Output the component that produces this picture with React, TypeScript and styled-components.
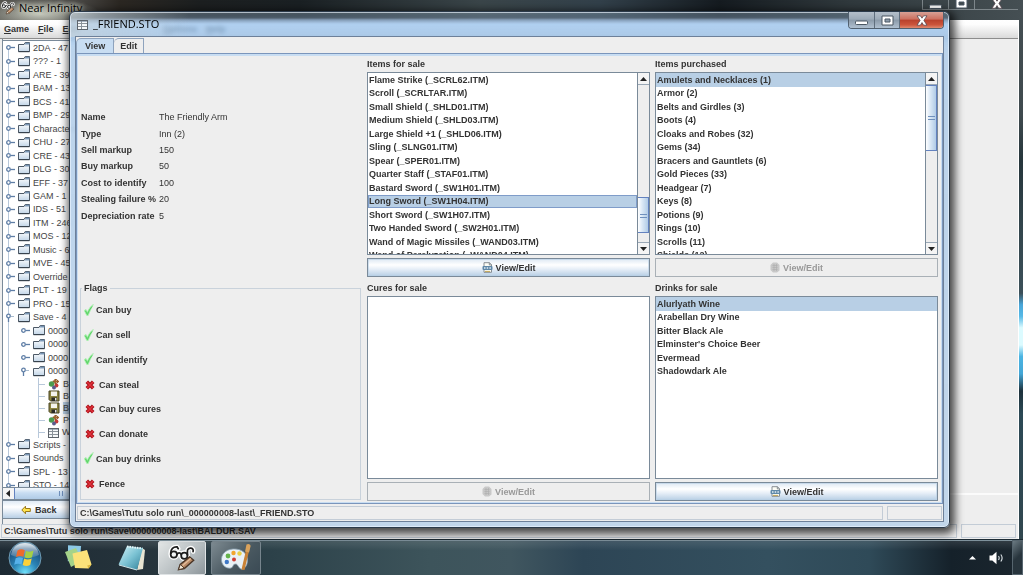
import React from "react";
import styled, { createGlobalStyle, css } from "styled-components";

const GlobalStyle = createGlobalStyle`
  *, *::before, *::after { box-sizing: border-box; }
  body {
    margin: 0;
    background: #26343c;
    color: #333;
    font: 9px/12px "Liberation Sans", Arial, sans-serif;
    cursor: default;
    overflow: hidden;
  }
  button { font: inherit; color: inherit; }
  ul { list-style: none; margin: 0; padding: 0; }
`;

/* ---------- desktop ---------- */

const Desktop = styled.div`
  position: relative;
  min-height: 100vh;
  display: flex;
  flex-direction: column;
  background: linear-gradient(
    #454f53 0, #3f4a4e 20%, #26363c 28%, #33464d 40%, #3c5059 51%,
    #48a5d8 53%, #56b9e6 55%, #dcfbff 57%, #dcfbff 60%, #4bb4e2 62%,
    #43a6d6 65%, #1d323c 68%, #2c4955 72%, #33464d 100%
  );
`;

/* ---------- browser window at the back ---------- */

const MainWindow = styled.div`
  flex: 1;
  display: flex;
  flex-direction: column;
  margin-right: 4px;
  border-right: 1px solid #fff;
`;

const MainTitleBar = styled.header`
  display: flex;
  align-items: flex-start;
  justify-content: space-between;
  height: 20px;
  margin-right: -5px;
  background:
    radial-gradient(ellipse 60px 16px at 40px 14px, rgba(235, 240, 225, 0.75), transparent),
    linear-gradient(90deg, #55544f 0, #4a4946 75px, #2b2722 120px, #1c1f20 200px, #1a2023 300px, #3a4549 480px, #32404a 600px, #151b20 720px, #30393d 850px, #454f53 100%);
`;

const MainTitle = styled.div`
  display: flex;
  align-items: center;
  gap: 4px;
  height: 15px;
  padding-left: 1px;
  color: #000;
  font: 11px/15px "Open Sans", "Noto Sans", sans-serif;
  text-shadow: 0 0 5px #e8ecdc, 0 0 5px #c8ccbc;
`;

const MainControls = styled.div`
  display: flex;
  height: 10px;
  margin-right: 5px;
  overflow: hidden;
`;

const MainControl = styled.button<{ $wide?: boolean }>`
  display: flex;
  align-items: flex-end;
  justify-content: center;
  width: ${(p) => (p.$wide ? 44 : 26)}px;
  padding: 0;
  border: 0 solid #7d868a;
  border-width: 0 0 1px 1px;
  background: transparent;
`;

const MenuBar = styled.nav`
  display: grid;
  grid-template-columns: 150px 1fr;
  gap: 9px;
  height: 19px;
  padding: 3px 4px;
  border-bottom: 1px solid #8d8d8d;
  background: linear-gradient(#fff 0, #fdfdfd 25%, #dadada 100%);
  font-weight: bold;
`;

const MenuGroup = styled.div`
  display: flex;
  gap: 9px;
`;

const MenuItem = styled.button`
  padding: 0;
  border: 0;
  background: none;
  font-weight: bold;
  line-height: 12px;

  &::first-letter { text-decoration: underline; }
`;

const MainBody = styled.div`
  flex: 1;
  display: grid;
  grid-template-columns: 320px 1fr;
  gap: 4px;
  min-height: 0;
  background: #eee;
`;

const TreePane = styled.div`
  display: flex;
  flex-direction: column;
  margin-left: 2px;
  padding-top: 1px;
  border-left: 1px solid #7a8a99;
`;

const EditorPane = styled.div`
  height: 456px;
  border-bottom: 2px solid #fbfbfb;
`;

const TreeView = styled.div`
  height: 447px;
  overflow: hidden;
  border-top: 1px solid #7a8a99;
  background:
    linear-gradient(#b8c8da, #b8c8da) 5px 6px / 1px 100% no-repeat,
    #fff;
`;

const TreeGroup = styled.ul<{ $height: number }>`
  display: grid;
  grid-auto-rows: 1fr;
  height: ${(p) => p.$height}px;
`;

const TreeRow = styled.li<{ $level: number; $selected?: boolean }>`
  display: flex;
  align-items: center;
  gap: 3px;
  min-height: 0;
  padding-left: ${(p) => [3, 18, 33][p.$level]}px;
  white-space: nowrap;
  color: #444;

  span {
    background: ${(p) => (p.$selected ? "#b8cfe5" : "transparent")};
  }
`;

const HScrollBar = styled.div`
  display: flex;
  height: 13px;
  border: 1px solid #7a8a99;
  border-left: 0;
  background: #eee;
`;

const HThumb = styled.div`
  display: flex;
  align-items: center;
  justify-content: center;
  width: 92px;
  border: 1px solid #6382bf;
  border-width: 0 1px;
  background: linear-gradient(#f4f8fc, #c8ddf2 45%, #b0cbe6);
`;

const BackButton = styled.button`
  display: flex;
  align-items: center;
  gap: 4px;
  height: 19px;
  padding: 0 0 0 18px;
  border: 1px solid #7a8a99;
  border-left: 0;
  background: linear-gradient(#dfeaf5, #fff 35%, #e6eef7 60%, #b8cfe5);
  font-weight: bold;
`;

const StatusRow = styled.footer`
  display: grid;
  grid-template-columns: 1fr 55px;
  gap: 4px;
  background: #eee;
  font-weight: bold;
`;

const StatusField = styled.div`
  height: 14px;
  padding-left: 2px;
  border: 1px solid #c3ccd6;
  white-space: nowrap;
`;

const MainStatus = styled(StatusRow)`
  padding: 0 2px 1px 1px;
`;

/* ---------- store dialog ---------- */

const Dialog = styled.section`
  position: absolute;
  top: 11px;
  left: 69px;
  right: 73px;
  padding: 0 5px 5px;
  border: 1px solid #2b3a4a;
  border-radius: 6px;
  background:
    linear-gradient(90deg, rgba(205, 213, 216, 0.6), rgba(205, 213, 216, 0) 120px) 0 0 / 100% 25px no-repeat,
    linear-gradient(
      rgba(150, 175, 195, 0.4) 0, rgba(90, 112, 135, 0.6) 6px, rgba(128, 158, 190, 0.8) 8px,
      rgba(150, 192, 235, 0.75) 12px, rgba(155, 195, 235, 0.75) 25px, rgba(180, 207, 234, 0.9) 40px, rgba(190, 212, 234, 0.92) 100%
    );
  backdrop-filter: blur(2px);
  box-shadow: inset 0 0 0 1px rgba(235, 245, 255, 0.65), 2px 3px 9px 3px rgba(0, 0, 0, 0.7);
`;

const DialogTitleBar = styled.header`
  display: flex;
  justify-content: space-between;
  height: 24px;
`;

const DialogTitle = styled.h1`
  display: flex;
  align-items: center;
  gap: 5px;
  margin: 0;
  padding-left: 2px;
  color: #000;
  font: 11px/16px "Open Sans", "Noto Sans", sans-serif;
`;

const WindowControls = styled.div`
  display: flex;
  height: 17px;
  border: 1px solid #51606f;
  border-top: 0;
  border-radius: 0 0 4px 4px;
  overflow: hidden;
`;

const WindowControl = styled.button<{ $close?: boolean }>`
  display: flex;
  align-items: center;
  justify-content: center;
  width: ${(p) => (p.$close ? 44 : 25)}px;
  padding: 0;
  border: 0;
  border-left: ${(p) => (p.$close ? "1px solid #7a4a48" : "0")};
  background: ${(p) =>
    p.$close
      ? "linear-gradient(#d8a095 0, #cc6f5f 45%, #b9412d 50%, #cc553c 80%, #e08a70)"
      : "linear-gradient(#b4bfca 0, #9caab7 45%, #8b9aa9 50%, #b0c0d0)"};

  & + & { border-left: 1px solid #5f6e7d; }
`;

const DialogBody = styled.div`
  display: flex;
  flex-direction: column;
  border: 1px solid #6d8099;
  background: #eee;
`;

const TabStrip = styled.div`
  display: flex;
  align-items: flex-end;
  height: 16px;
`;

const Tab = styled.button<{ $active?: boolean }>`
  height: 15px;
  padding: 0 8px;
  border: 1px solid #8ea3bd;
  border-bottom: 0;
  border-top-left-radius: 5px;
  background: ${(p) => (p.$active ? "#c8ddf2" : "#eee")};
  font-weight: bold;
  line-height: 14px;

  & + & { border-left: 0; padding: 0 6px; }
`;

const TabPanel = styled.div`
  display: grid;
  grid-template-columns: repeat(3, minmax(0, 1fr));
  column-gap: 5px;
  row-gap: 3px;
  padding: 0 3px 1px 1px;
  border: 2px solid #c8ddf2;
  border-top-width: 3px;
  outline: 1px solid #7a95bb;
  outline-offset: -1px;
`;

const Cell = styled.div`
  display: flex;
  flex-direction: column;
  min-width: 0;
`;

const DetailsCell = styled(Cell)`
  justify-content: center;
`;

const DetailsTable = styled.table`
  height: 115px;
  border-collapse: collapse;

  th, td {
    padding: 0;
    text-align: left;
    line-height: 12px;
  }
  th { width: 80px; padding-left: 2px; white-space: nowrap; }
`;

const Flags = styled.fieldset`
  flex: 1;
  margin: 2px 1px 1px 1px;
  padding: 0;
  border: 1px solid #c9d2db;
  min-width: 0;

  legend {
    margin-left: 1px;
    padding: 0 2px;
    height: 12px;
    font-weight: bold;
  }
`;

const FlagList = styled.ul`
  display: grid;
  grid-auto-rows: 1fr;
  height: 198px;
  margin-top: 4px;
`;

const FlagItem = styled.li<{ $on: boolean }>`
  display: flex;
  align-items: center;
  gap: ${(p) => (p.$on ? 2 : 4)}px;
  padding-left: ${(p) => (p.$on ? 3 : 4)}px;
  font-weight: bold;
`;

const ListTitle = styled.h2`
  margin: 0;
  height: 16px;
  font: bold 9px/17px "Liberation Sans", Arial, sans-serif;
`;

const ListFrame = styled.div`
  display: flex;
  height: 183px;
  border: 1px solid #7a8a99;
  background: #fff;
`;

const ListViewport = styled.div`
  flex: 1;
  overflow: hidden;
  min-width: 0;
`;

const ItemList = styled.ul<{ $rows: number; $height: number }>`
  display: grid;
  grid-template-rows: repeat(${(p) => p.$rows}, minmax(0, 1fr));
  height: ${(p) => p.$height}px;
`;

const ListItem = styled.li<{ $selected?: boolean; $focused?: boolean }>`
  display: flex;
  align-items: center;
  padding-left: 1px;
  font-weight: bold;
  white-space: nowrap;
  ${(p) =>
    p.$selected &&
    css`
      background: #b8cfe5;
      box-shadow: inset 0 0 0 1px ${p.$focused ? "#7f9cc9" : "#b8cfe5"};
    `}
`;

const VScrollBar = styled.div`
  display: flex;
  flex-direction: column;
  width: 12px;
  border-left: 1px solid #7a8a99;
  background: #eee;
`;

const ScrollArrow = styled.button<{ $end?: boolean; $horizontal?: boolean }>`
  display: flex;
  align-items: center;
  justify-content: center;
  flex: none;
  width: 11px;
  height: ${(p) => (p.$horizontal ? 11 : 12)}px;
  padding: 0;
  border: 0 solid #9aa8b6;
  ${(p) => !p.$horizontal && (p.$end ? "border-top-width: 1px;" : "border-bottom-width: 1px;")}
  background: #f4f4f4;
`;

const Track = styled.div<{ $before: number; $thumb: number; $after: number }>`
  flex: 1;
  display: grid;
  grid-template-rows: ${(p) => `${p.$before}fr ${p.$thumb}fr ${p.$after}fr`};
`;

const Thumb = styled.div`
  grid-row: 2;
  display: flex;
  align-items: center;
  justify-content: center;
  border: 1px solid #6382bf;
  border-left: 0;
  background: linear-gradient(90deg, #fff, #dce9f6 40%, #b0cbe6);
`;

const ViewEditButton = styled.button`
  display: flex;
  align-items: center;
  justify-content: center;
  gap: 3px;
  height: 19px;
  margin-top: 3px;
  padding: 0;
  border: 1px solid #7a8a99;
  background: linear-gradient(#dde8f3, #fff 35%, #e6eef7 60%, #b8cfe5);
  box-shadow: inset 0 0 0 1px rgba(184, 207, 229, 0.6);
  font-weight: bold;

  &:disabled {
    border-color: #a9b0b6;
    background: #eee;
    box-shadow: none;
    color: #999;
  }
`;

const DialogStatus = styled(StatusRow)`
  padding: 2px 1px 1px;
`;

/* ---------- taskbar ---------- */

const Taskbar = styled.footer`
  display: flex;
  align-items: stretch;
  height: 36px;
  border-top: 1px solid #1c2a33;
  box-shadow: inset 0 1px 0 #7f929c;
  background:
    linear-gradient(rgba(255, 255, 255, 0.12), rgba(255, 255, 255, 0) 30%),
    linear-gradient(90deg, #1d2a33 0, #26343c 150px, #2c4149 270px, #3d545b 42%, #40565f 50%, #2d4555 57%, #34505f 75%, #2f4a58 85%, #15212a 93%, #1b262e 100%);
`;

const TaskButton = styled.button<{ $kind?: "active" | "open"; $width: number }>`
  display: flex;
  align-items: center;
  justify-content: center;
  width: ${(p) => p.$width}px;
  margin: 1px 0 0;
  padding: 0;
  border: 0;
  background: none;
  ${(p) =>
    p.$kind &&
    css`
      margin-right: 5px;
      border: 1px solid ${p.$kind === "active" ? "#dfe3e5" : "#77858d"};
      border-radius: 2px;
      background: ${p.$kind === "active"
        ? "linear-gradient(135deg, #e3e6e6, #b4bbbe 60%, #8d969b)"
        : "linear-gradient(135deg, #7d8a91, #4a5961 55%, #3a4a54)"};
    `}
`;

const Tray = styled.div`
  display: flex;
  align-items: center;
  gap: 13px;
  margin-left: auto;
`;

const TrayButton = styled.button`
  display: flex;
  padding: 0;
  border: 0;
  background: none;
`;

const ShowDesktop = styled.button`
  align-self: stretch;
  width: 11px;
  margin-left: -5px;
  padding: 0;
  border: 1px solid #56656e;
  background: linear-gradient(135deg, #6b7a82, #28353d 50%);
`;

/* ---------- drawings ---------- */

const GlassesIcon = ({ size }: { size: number }) => (
  <svg width={size} height={size} viewBox="0 0 24 24" fill="none">
    <g stroke="#fff" strokeWidth="3.8" strokeLinecap="round" strokeLinejoin="round">
      <circle cx="5" cy="9" r="2.700" />
      <circle cx="14" cy="10" r="2.700" />
      <path d="M2.300 8C2.300 4.500 4.500 2.200 7.800 2.500l1 1.500M7.700 9c1-1.800 2.800-1.800 3.600 0M16.700 9.500c0-3.500-.7-5.500 2.300-6 2-.3 3 1.500 2.500 3" />
    </g>
    <g stroke="#1d1d1d" strokeWidth="1.500" strokeLinecap="round">
      <circle cx="5" cy="9" r="2.700" fill="#f2f4f4" />
      <circle cx="14" cy="10" r="2.700" fill="#f2f4f4" />
      <path d="M2.300 8C2.300 4.500 4.500 2.200 7.800 2.500l1 1.500M7.700 9c1-1.800 2.800-1.800 3.600 0M16.700 9.500c0-3.500-.7-5.500 2.300-6 2-.3 3 1.500 2.500 3" />
    </g>
    <path d="M9 22l1.500-4.500 8-6.500 3.500 3-8 7z" fill="#b98a66" stroke="#4a3526" strokeWidth="1.200" />
    <path d="M9 22l1.500-4.500 3.500 3.300z" fill="#f4ead8" stroke="#4a3526" strokeWidth=".8" />
    <path d="M12.500 18.500l7-6" stroke="#e2bd9c" strokeWidth="1.200" />
  </svg>
);

const TableIcon = () => (
  <svg width="11" height="11" viewBox="0 0 11 11" fill="none">
    <rect x=".5" y="1.500" width="10" height="9" fill="#f6f8f9" stroke="#5d646b" />
    <path d="M1 2.500h9" stroke="#a8b4c2" />
    <path d="M1 4.500h9M1 7.500h9M4.500 2v8" stroke="#8a9299" />
  </svg>
);

const Expander = ({ open }: { open?: boolean }) => (
  <svg width="9" height="9" viewBox="0 0 9 9" fill="none" stroke="#5f7ea6">
    {open ? (
      <>
        <circle cx="2.500" cy="3" r="1.800" fill="#fff" strokeWidth="1.300" />
        <path d="M2.500 5v4" strokeWidth="1.300" />
        <path d="M5 3.500h3" stroke="#a9bccf" />
      </>
    ) : (
      <>
        <circle cx="2.500" cy="4.500" r="1.800" fill="#fff" strokeWidth="1.300" />
        <path d="M4.500 4.500H9" strokeWidth="1.300" />
      </>
    )}
  </svg>
);

const FolderIcon = () => (
  <svg width="12" height="11" viewBox="0 0 12 11">
    <defs>
      <linearGradient id="folder" x1="0" y1="0" x2="0" y2="1">
        <stop offset="0" stopColor="#fff" />
        <stop offset="1" stopColor="#c3d6e8" />
      </linearGradient>
    </defs>
    <path d="M.5 2.500h5.500L7.200.5h4.300v9H.5z" fill="url(#folder)" stroke="#4d5966" />
    <path d="M6.500 2.500L7.500.8h4v1.700z" fill="#7996b5" />
    <path d="M.5 9.700h11" stroke="#333d48" />
  </svg>
);

const PictureIcon = () => (
  <svg width="12" height="12" viewBox="0 0 12 12">
    <path d="M7.500 1v8M4.500 3.500h6.500" stroke="#a5662f" strokeWidth="1.500" />
    <circle cx="7.800" cy="3.500" r="2" fill="none" stroke="#8d5a2a" />
    <circle cx="3.500" cy="6" r="2.700" fill="#4d9a4f" />
    <circle cx="8.500" cy="7.500" r="1.900" fill="#c43a3a" />
    <circle cx="6" cy="9.500" r="2" fill="#5a5c8c" />
  </svg>
);

const DiskIcon = () => (
  <svg width="12" height="12" viewBox="0 0 12 12">
    <path d="M1 1h10v10H2.500L1 9.500z" fill="#8c8540" stroke="#4a4624" />
    <rect x="3" y="1.500" width="6" height="4.500" fill="#f4f4ee" />
    <rect x="3.500" y="7.500" width="5.500" height="3.500" fill="#2b2b26" />
    <rect x="7" y="8" width="1.500" height="2.500" fill="#e8e8e0" />
  </svg>
);

const LeafLine = () => (
  <svg width="9" height="12" viewBox="0 0 9 12" stroke="#b8c8da">
    <path d="M2.500 0v12M3 6.500h6" />
  </svg>
);

const BackArrow = () => (
  <svg width="10" height="10" viewBox="0 0 10 10">
    <path d="M.8 5L4.500 1.200v2.300h4.800v3H4.500v2.300z" fill="#ffe34d" stroke="#9a7a1c" />
  </svg>
);

const Triangle = ({ dir }: { dir: "up" | "down" | "left" }) => {
  const d = { up: "M0 5l3.500-4L7 5z", down: "M0 1l3.500 4L7 1z", left: "M5 0L1 3.500 5 7z" }[dir];
  return (
    <svg width="7" height={dir === "left" ? 7 : 6} viewBox={dir === "left" ? "0 0 7 7" : "0 0 7 6"}>
      <path d={d} fill="#222" />
    </svg>
  );
};

const Grip = ({ vertical }: { vertical?: boolean }) => (
  <svg width="7" height="7" viewBox="0 0 7 7" stroke="#6f90bd">
    <path d={vertical ? "M2.500 1v5M5.500 1v5" : "M0 2.500h7M0 5.500h7"} />
  </svg>
);

const CheckIcon = () => (
  <svg width="10" height="13" viewBox="0 0 10 13" fill="none">
    <path d="M.3 6.500l1.700-1 1.500 2.500C4.800 4.800 6.500 2.500 9.300.5 7.500 4 5.500 7.500 4.200 11.500H2.800z" fill="#7fe487" stroke="#a9eeae" strokeWidth=".9" />
    <path d="M1.500 7l1.900 3.500C4.500 7.500 6 4.800 8 2.500" stroke="#5cd166" />
  </svg>
);

const CrossIcon = () => (
  <svg width="10" height="10" viewBox="0 0 10 10">
    <path d="M1.800 1.800l6.400 6.400M8.200 1.800L1.800 8.200" stroke="#a80f18" strokeWidth="3.600" />
    <path d="M2 2l6 6M8 2L2 8" stroke="#e2333c" strokeWidth="1.500" />
  </svg>
);

const ZoomPageIcon = ({ disabled }: { disabled?: boolean }) =>
  disabled ? (
    <svg width="10" height="11" viewBox="0 0 10 11">
      <path d="M3 .5h4L9.500 3v5.500L7 10.500H3L.5 8V3z" fill="#c8c8c8" />
      <path d="M2.500 3.500h5M2.500 5.500h5M2.500 7.500h5M4 2v7M6.500 2v7" stroke="#b0b0b0" strokeWidth=".7" />
    </svg>
  ) : (
    <svg width="11" height="11" viewBox="0 0 11 11">
      <path d="M2 .7h5.500l2 2v7.600H2z" fill="#fdfdf6" stroke="#7c8288" strokeWidth=".9" />
      <path d="M7.300.7v2.200h2.200" fill="none" stroke="#7c8288" strokeWidth=".9" />
      <rect x=".5" y="4" width="10" height="4" rx="1" fill="#5f88a8" />
      <path d="M2 6h1.500M4.700 6h1.500M7.400 6h1.500" stroke="#e4eef5" strokeWidth="1.300" />
      <path d="M3 9.400h5" stroke="#c2a552" />
    </svg>
  );

const MinimizeGlyph = () => (
  <svg width="13" height="10" viewBox="0 0 13 10">
    <rect x=".5" y="6" width="12" height="3.500" rx="1" fill="#fff" stroke="#4a5763" />
  </svg>
);

const MaximizeGlyph = () => (
  <svg width="13" height="11" viewBox="0 0 13 11">
    <path d="M1 1h11v9H1zM4 4v3h5V4z" fillRule="evenodd" fill="#fff" stroke="#4a5763" />
  </svg>
);

const CloseGlyph = () => (
  <svg width="12" height="11" viewBox="0 0 12 11">
    <path d="M1 .8h3.400L6 3.200 7.600.8H11L7.900 5.400 11 10.200H7.600L6 7.600l-1.600 2.600H1l3.100-4.800z" fill="#fff" stroke="#5a4a50" strokeWidth=".8" />
  </svg>
);

const StartOrb = () => (
  <svg width="36" height="34" viewBox="0 0 36 34">
    <defs>
      <radialGradient id="orb" cx=".5" cy=".95" r=".95">
        <stop offset="0" stopColor="#6fe0fa" />
        <stop offset=".4" stopColor="#2b86b8" />
        <stop offset=".8" stopColor="#1c4f7d" />
        <stop offset="1" stopColor="#7fa3ba" />
      </radialGradient>
      <linearGradient id="shine" x1="0" y1="0" x2="0" y2="1">
        <stop offset="0" stopColor="#fff" stopOpacity=".8" />
        <stop offset="1" stopColor="#fff" stopOpacity=".1" />
      </linearGradient>
    </defs>
    <circle cx="18" cy="17" r="16" fill="url(#orb)" stroke="#6f9bb3" />
    <path d="M4 14C5 6 11 2 18 2s13 4 14 12c-8 4-20 4-28 0z" fill="url(#shine)" />
    <path d="M10.500 9.500c2.500-1.500 5-1.500 7.300-.2l-1.500 6.500c-2.300-1.300-4.800-1.200-7.300.2z" fill="#ee6a2c" />
    <path d="M19 9.800c2.500 1.300 5 1.200 7.500-.2L25 16.200c-2.500 1.400-5 1.400-7.500.1z" fill="#a5cf45" />
    <path d="M8.700 17.300c2.500-1.400 5-1.400 7.300-.2l-1.500 6.500c-2.300-1.300-4.800-1.200-7.300.2z" fill="#56b1ea" />
    <path d="M17.200 17.600c2.500 1.300 5 1.200 7.500-.2l-1.500 6.600c-2.500 1.400-5 1.400-7.500.1z" fill="#fbd13a" />
  </svg>
);

const StickyNotesIcon = () => (
  <svg width="30" height="28" viewBox="0 0 30 28">
    <path d="M4 2l13-1 1 14-12 3z" fill="#8cc8e6" transform="rotate(8 10 9)" />
    <path d="M2 8l11-4 6 13-11 6z" fill="#a5d389" />
    <path d="M9.500 9.500L24 6l4.500 14.500-3 4-13.500-.5z" fill="#fbe27a" />
    <path d="M28.500 20.500l-4.300 1 1.300 3z" fill="#d9b53f" />
  </svg>
);

const NotepadIcon = () => (
  <svg width="30" height="28" viewBox="0 0 30 28">
    <defs>
      <linearGradient id="pad" x1="0" y1="0" x2="1" y2="1">
        <stop offset="0" stopColor="#d4f2f7" />
        <stop offset=".5" stopColor="#7cc3d4" />
        <stop offset="1" stopColor="#2f7f98" />
      </linearGradient>
    </defs>
    <path d="M25 4l3 2-2 19-6 1z" fill="#e8e4d2" />
    <path d="M10 2l16 2-6 22L1.500 20.500z" fill="url(#pad)" />
    <path d="M10 2.500l15.500 2" stroke="#e8f6f8" strokeWidth="2" strokeDasharray="1.500 1" />
    <path d="M2 21l18 5" stroke="#d2e9ee" />
  </svg>
);

const PaintIcon = () => (
  <svg width="32" height="30" viewBox="0 0 32 30">
    <path d="M13 6C5 6.500 1 12 1.500 17.500 2 23 7 26 11 25c2.500-.7 1.500-3.500 4-4 2.500-.4 3 2.500 5 4.500 3 2.500 7.500-2 7.500-8.500C27.500 10 21 5.500 13 6z" fill="#e9f1f6" stroke="#8ba2b2" strokeWidth=".8" />
    <circle cx="8" cy="13" r="2.400" fill="#63b24b" />
    <circle cx="13.500" cy="10" r="2.200" fill="#f2a52d" />
    <circle cx="19.500" cy="10.500" r="2.200" fill="#e9cf46" />
    <circle cx="6.800" cy="19" r="2.200" fill="#3f78c6" />
    <circle cx="14" cy="16.500" r="2" fill="#cf3c33" />
    <path d="M27 3l3 1-5.500 23-3-.5z" fill="#c98236" />
    <path d="M26.500 1.500c2-1.500 4.500 0 4 2l-1.500 6-4-1z" fill="#d9a25c" />
  </svg>
);

const SpeakerIcon = () => (
  <svg width="15" height="14" viewBox="0 0 15 14" fill="none">
    <path d="M.5 4.500h2.800L7.500.8v12.400L3.300 9.500H.5z" fill="#fff" />
    <path d="M9.500 5c.8 1.200.8 2.800 0 4M11.800 3.500c1.500 2 1.500 5 0 7" stroke="#dfe6ea" strokeWidth="1.100" />
  </svg>
);

/* ---------- data ---------- */

const menuGroups = [["Game", "File", "Edit"], ["Options", "Help"]];

const folders = [
  "2DA - 47", "??? - 1", "ARE - 39", "BAM - 13", "BCS - 41", "BMP - 29", "Characters", "CHU - 27",
  "CRE - 43", "DLG - 30", "EFF - 37", "GAM - 1", "IDS - 51", "ITM - 246", "MOS - 12", "Music - 6",
  "MVE - 45", "Override", "PLT - 19", "PRO - 15",
];

const details: [string, string][] = [
  ["Name", "The Friendly Arm"],
  ["Type", "Inn (2)"],
  ["Sell markup", "150"],
  ["Buy markup", "50"],
  ["Cost to identify", "100"],
  ["Stealing failure %", "20"],
  ["Depreciation rate", "5"],
];

const flags: [string, boolean][] = [
  ["Can buy", true],
  ["Can sell", true],
  ["Can identify", true],
  ["Can steal", false],
  ["Can buy cures", false],
  ["Can donate", false],
  ["Can buy drinks", true],
  ["Fence", false],
];

const itemsForSale = [
  "Flame Strike (_SCRL62.ITM)", "Scroll (_SCRLTAR.ITM)", "Small Shield (_SHLD01.ITM)",
  "Medium Shield (_SHLD03.ITM)", "Large Shield +1 (_SHLD06.ITM)", "Sling (_SLNG01.ITM)",
  "Spear (_SPER01.ITM)", "Quarter Staff (_STAF01.ITM)", "Bastard Sword (_SW1H01.ITM)",
  "Long Sword (_SW1H04.ITM)", "Short Sword (_SW1H07.ITM)", "Two Handed Sword (_SW2H01.ITM)",
  "Wand of Magic Missiles (_WAND03.ITM)", "Wand of Paralyzation (_WAND04.ITM)",
];

const itemsPurchased = [
  "Amulets and Necklaces (1)", "Armor (2)", "Belts and Girdles (3)", "Boots (4)",
  "Cloaks and Robes (32)", "Gems (34)", "Bracers and Gauntlets (6)", "Gold Pieces (33)",
  "Headgear (7)", "Keys (8)", "Potions (9)", "Rings (10)", "Scrolls (11)", "Shields (12)",
];

const drinks = [
  "Alurlyath Wine", "Arabellan Dry Wine", "Bitter Black Ale",
  "Elminster's Choice Beer", "Evermead", "Shadowdark Ale",
];

/* ---------- parts ---------- */

interface StoreListProps {
  title: string;
  items: string[];
  height: number;
  selected?: number;
  focused?: boolean;
  disabled?: boolean;
  scroll?: [number, number, number];
}

const StoreList = ({ title, items, height, selected, focused, disabled, scroll }: StoreListProps) => (
  <Cell>
    <ListTitle>{title}</ListTitle>
    <ListFrame>
      <ListViewport>
        <ItemList role="listbox" aria-label={title} $rows={Math.max(items.length, 1)} $height={height}>
          {items.map((item, i) => (
            <ListItem
              key={item}
              role="option"
              aria-selected={i === selected}
              $selected={i === selected}
              $focused={focused}
            >
              {item}
            </ListItem>
          ))}
        </ItemList>
      </ListViewport>
      {scroll && (
        <VScrollBar>
          <ScrollArrow aria-label="Scroll up"><Triangle dir="up" /></ScrollArrow>
          <Track $before={scroll[0]} $thumb={scroll[1]} $after={scroll[2]}>
            <Thumb><Grip /></Thumb>
          </Track>
          <ScrollArrow aria-label="Scroll down" $end><Triangle dir="down" /></ScrollArrow>
        </VScrollBar>
      )}
    </ListFrame>
    <ViewEditButton disabled={disabled}>
      <ZoomPageIcon disabled={disabled} />
      View/Edit
    </ViewEditButton>
  </Cell>
);

const FolderRow = ({ label, level = 0, open }: { label: string; level?: number; open?: boolean }) => (
  <TreeRow $level={level}>
    <Expander open={open} />
    <FolderIcon />
    <span>{label}</span>
  </TreeRow>
);

const LeafRow = ({ label, icon, selected }: { label: string; icon: React.ReactNode; selected?: boolean }) => (
  <TreeRow $level={2} $selected={selected}>
    <LeafLine />
    {icon}
    <span>{label}</span>
  </TreeRow>
);

export default function App() {
  return (
    <>
      <GlobalStyle />
      <Desktop>
        <MainWindow>
          <MainTitleBar>
            <MainTitle>
              <GlassesIcon size={14} />
              Near Infinity
            </MainTitle>
            <MainControls>
              <MainControl aria-label="Minimize"><MinimizeGlyph /></MainControl>
              <MainControl aria-label="Maximize"><MaximizeGlyph /></MainControl>
              <MainControl aria-label="Close" $wide><CloseGlyph /></MainControl>
            </MainControls>
          </MainTitleBar>
          <MenuBar>
            {menuGroups.map((group) => (
              <MenuGroup key={group[0]}>
                {group.map((m) => <MenuItem key={m}>{m}</MenuItem>)}
              </MenuGroup>
            ))}
          </MenuBar>
          <MainBody>
            <TreePane>
              <TreeView>
                <TreeGroup $height={337}>
                  {folders.map((f) => <FolderRow key={f} label={f} />)}
                  <FolderRow label="Save - 4" open />
                  <FolderRow label="0000" level={1} />
                  <FolderRow label="0000" level={1} />
                  <FolderRow label="0000" level={1} />
                  <FolderRow label="0000" level={1} open />
                </TreeGroup>
                <TreeGroup $height={60}>
                  <LeafRow label="B" icon={<PictureIcon />} />
                  <LeafRow label="B" icon={<DiskIcon />} />
                  <LeafRow label="B" icon={<DiskIcon />} selected />
                  <LeafRow label="P" icon={<PictureIcon />} />
                  <LeafRow label="W" icon={<TableIcon />} />
                </TreeGroup>
                <TreeGroup $height={54}>
                  <FolderRow label="Scripts -" />
                  <FolderRow label="Sounds" />
                  <FolderRow label="SPL - 13" />
                  <FolderRow label="STO - 14" />
                </TreeGroup>
              </TreeView>
              <HScrollBar>
                <ScrollArrow aria-label="Scroll left" $horizontal><Triangle dir="left" /></ScrollArrow>
                <HThumb><Grip vertical /></HThumb>
              </HScrollBar>
              <BackButton><BackArrow />Back</BackButton>
            </TreePane>
            <EditorPane />
          </MainBody>
          <MainStatus>
            <StatusField>C:\Games\Tutu solo run\Save\000000008-last\BALDUR.SAV</StatusField>
            <StatusField />
          </MainStatus>
        </MainWindow>

        <Dialog aria-label="_FRIEND.STO">
          <DialogTitleBar>
            <DialogTitle><TableIcon />_FRIEND.STO</DialogTitle>
            <WindowControls>
              <WindowControl aria-label="Minimize"><MinimizeGlyph /></WindowControl>
              <WindowControl aria-label="Maximize"><MaximizeGlyph /></WindowControl>
              <WindowControl aria-label="Close" $close><CloseGlyph /></WindowControl>
            </WindowControls>
          </DialogTitleBar>
          <DialogBody>
            <TabStrip role="tablist">
              <Tab role="tab" aria-selected $active>View</Tab>
              <Tab role="tab" aria-selected={false}>Edit</Tab>
            </TabStrip>
            <TabPanel role="tabpanel">
              <DetailsCell>
                <DetailsTable>
                  <tbody>
                    {details.map(([label, value]) => (
                      <tr key={label}>
                        <th scope="row">{label}</th>
                        <td>{value}</td>
                      </tr>
                    ))}
                  </tbody>
                </DetailsTable>
              </DetailsCell>
              <StoreList title="Items for sale" items={itemsForSale} height={189} selected={9} focused scroll={[113, 36, 9]} />
              <StoreList title="Items purchased" items={itemsPurchased} height={189} selected={0} disabled scroll={[0, 66, 92]} />
              <Cell>
                <Flags>
                  <legend>Flags</legend>
                  <FlagList>
                    {flags.map(([label, on]) => (
                      <FlagItem key={label} $on={on}>
                        {on ? <CheckIcon /> : <CrossIcon />}
                        {label}
                      </FlagItem>
                    ))}
                  </FlagList>
                </Flags>
              </Cell>
              <StoreList title="Cures for sale" items={[]} height={81} disabled />
              <StoreList title="Drinks for sale" items={drinks} height={81} selected={0} />
            </TabPanel>
            <DialogStatus>
              <StatusField>C:\Games\Tutu solo run\_000000008-last\_FRIEND.STO</StatusField>
              <StatusField />
            </DialogStatus>
          </DialogBody>
        </Dialog>

        <Taskbar>
          <TaskButton $width={50} aria-label="Start"><StartOrb /></TaskButton>
          <TaskButton $width={56} aria-label="Sticky Notes"><StickyNotesIcon /></TaskButton>
          <TaskButton $width={52} aria-label="Notepad"><NotepadIcon /></TaskButton>
          <TaskButton $width={48} $kind="active" aria-label="Near Infinity"><GlassesIcon size={28} /></TaskButton>
          <TaskButton $width={50} $kind="open" aria-label="Paint"><PaintIcon /></TaskButton>
          <Tray>
            <TrayButton aria-label="Show hidden icons">
              <svg width="7" height="5" viewBox="0 0 7 5"><path d="M0 4.500L3.500 1 7 4.500z" fill="#fff" /></svg>
            </TrayButton>
            <TrayButton aria-label="Volume"><SpeakerIcon /></TrayButton>
            <ShowDesktop aria-label="Show desktop" />
          </Tray>
        </Taskbar>
      </Desktop>
    </>
  );
}
